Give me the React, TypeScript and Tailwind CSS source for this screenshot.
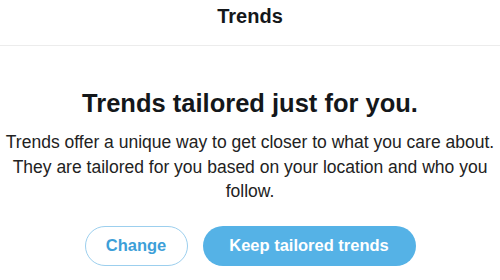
export default function App() {
  return (
    <div className="w-[500px] h-[280px] bg-white overflow-hidden font-['Liberation_Sans',Arial,sans-serif] text-[#14171a]">
      {/* Header */}
      <div className="h-[46px] pt-[4px] border-b border-[#ececec] text-center">
        <span className="text-[20px] leading-[24px] font-bold">Trends</span>
      </div>

      {/* Body */}
      <div className="flex flex-col items-center text-center">
        <h1 className="mt-[42px] text-[25.5px] leading-[30px] font-bold">
          Trends tailored just for you.
        </h1>
        <p className="mt-[12px] px-[2px] text-[17.5px] leading-[24.5px] text-[#222]">
          Trends offer a unique way to get closer to what you care about. They are tailored for you
          based on your location and who you follow.
        </p>

        <div className="mt-[22px] flex gap-[15px]">
          <button className="w-[103px] h-[40px] rounded-full border border-[#9ccfee] text-[#3d9fd8] text-[16.5px] font-bold">
            Change
          </button>
          <button className="w-[213px] h-[40px] rounded-full bg-[#55b2e6] text-white text-[16.5px] font-bold">
            Keep tailored trends
          </button>
        </div>
      </div>
    </div>
  )
}
